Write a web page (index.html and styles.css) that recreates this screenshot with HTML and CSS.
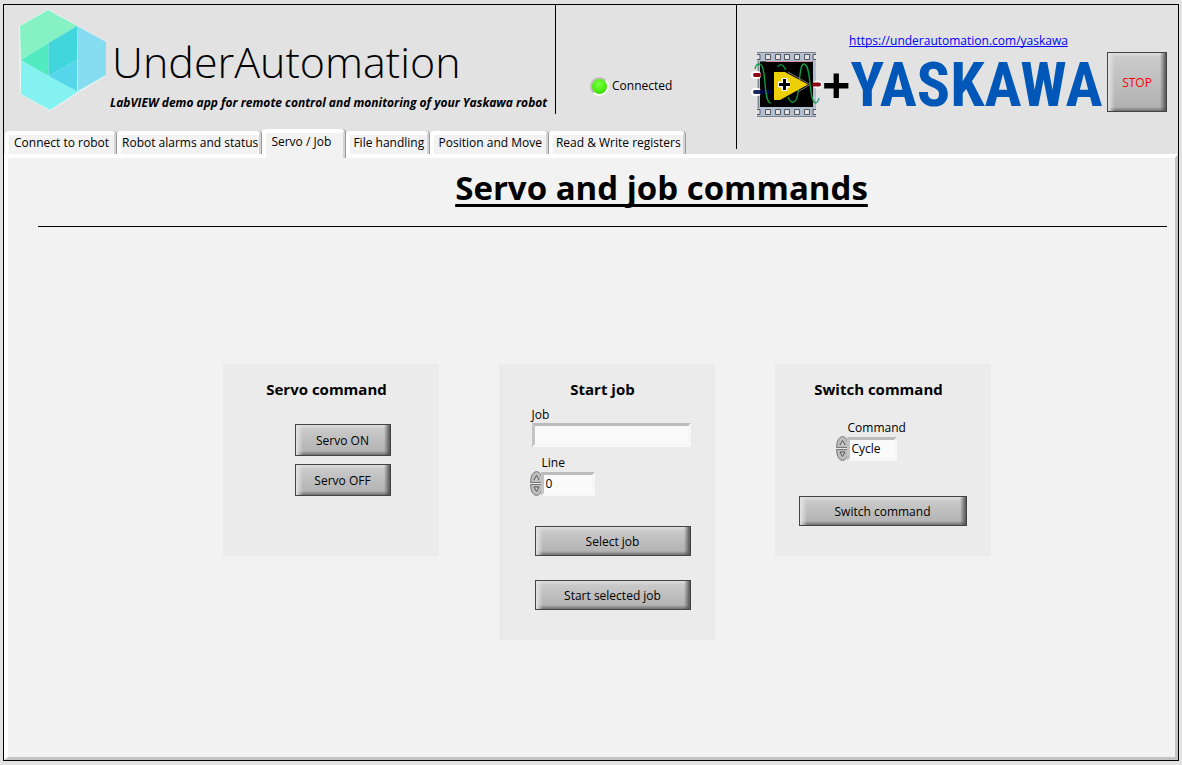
FILE: index.html
```html
<!DOCTYPE html>
<html lang="en">
<head>
<meta charset="utf-8">
<title>UnderAutomation - Yaskawa demo</title>
<link rel="stylesheet" href="styles.css">
</head>
<body>
<div class="frame">
  <header class="top">
    <div class="brand">
      <svg class="brand-mark" viewBox="0 0 88 102" aria-hidden="true">
        <path fill="#e9f6f4" d="M29 0 87 33v34L59 84 31 102 1 85 0 17z"/>
        <path fill="#86f2c4" d="M29 1 58 17 29.500 34 2 51 1 17z"/>
        <path fill="#84f2f0" d="M2 51 29.500 67 60 82 31 101 2 85z"/>
        <path fill="#86ddf1" d="M58 17 87 33v33L59 82z"/>
        <path fill="#52ebc0" d="M2 51 29.500 34v33z"/>
        <path fill="#40d6dc" d="M58 17v34L29.500 67V34z"/>
        <path fill="#55d6ea" d="M58 51v31L29.500 67z"/>
      </svg>
      <div class="brand-text">
        <div class="brand-name">UnderAutomation</div>
        <div class="tagline">LabVIEW demo app for remote control and monitoring of your Yaskawa robot</div>
      </div>
    </div>
    <div class="status"><span class="led"></span>Connected</div>
    <div class="partners">
      <a class="site" href="https://underautomation.com/yaskawa">https://underautomation.com/yaskawa</a>
      <div class="logos">
        <svg class="labview" viewBox="0 0 72 66" aria-hidden="true">
          <path fill="#b1bfd1" d="M7 1h59v64H7z"/>
          <g fill="#e2e2e2" stroke="#53575c">
            <path d="M15.500 2.500h5v5h-5zM25.500 2.500h5v5h-5zM34.500 2.500h5v5h-5zM44.500 2.500h5v5h-5zM54.500 2.500h5v5h-5zM15.500 57.500h5v5h-5zM25.500 57.500h5v5h-5zM34.500 57.500h5v5h-5zM44.500 57.500h5v5h-5zM54.500 57.500h5v5h-5z"/>
            <path d="M7 2.500h3v5H7M7 57.500h3v5H7M66 2.500h-3v5h3M66 57.500h-3v5h3"/>
          </g>
          <path fill="none" stroke="#7b838d" d="M7 .5h59M7 64.500h59M8.500 9v47"/>
          <path d="M10 9.500h53V55H10z"/>
          <path stroke="#d78b94" d="M16 9.500h46"/>
          <g fill="none" stroke-linecap="round">
            <path stroke="#fff" stroke-width="8" d="M5 23h2M5 40h2M67 32.500h1"/>
            <path stroke="#8a0614" stroke-width="4" d="M5 23h4M64 32.500h5"/>
            <path stroke="#17285f" stroke-width="4" d="M5 40h5"/>
          </g>
          <path stroke="#040447" stroke-width="4" d="M10 40h11"/>
          <g fill="none" stroke="#0c9f43" stroke-width="1.300">
            <path d="M5 17C6 12 8 12 10 12 17 14 13 51 20.700 51M27.700 15Q31.500 9 35.700 18M38 45Q42.500 55 47 46C50 34 49 12 54 12 62 12 58 51 66 51"/>
            <path stroke="#2ba88c" d="M66 51Q68 50 69 46"/>
          </g>
          <path fill="#edcf08" d="M24 20h11l23 12.500L30 48h-6z"/>
          <path stroke="#777" fill="none" d="M38 20 60 32.500 48 40"/>
          <path stroke="#fff" stroke-width="6" d="M28 32.500h12M34.500 26v13"/>
          <path stroke="#000" stroke-width="3" d="M29 32.500h11M34.500 27v11"/>
        </svg>
        <span class="plus">+</span>
        <span class="yaskawa">YASKAWA</span>
        <button class="btn stop" type="button">STOP</button>
      </div>
    </div>
    <nav class="tabs">
      <button class="tab" type="button">Connect to robot</button>
      <button class="tab wider" type="button">Robot alarms and status</button>
      <button class="tab short active" type="button" aria-current="page">Servo / Job</button>
      <button class="tab short" type="button">File handling</button>
      <button class="tab medium" type="button">Position and Move</button>
      <button class="tab wide" type="button">Read &amp; Write registers</button>
    </nav>
  </header>

  <main class="panel">
    <h1>Servo and job commands</h1>
    <hr>
    <div class="cards">
      <section class="card servo">
        <h2>Servo command</h2>
        <button class="btn" type="button">Servo ON</button>
        <button class="btn" type="button">Servo OFF</button>
      </section>

      <section class="card job">
        <h2>Start job</h2>
        <label for="job">Job</label>
        <input class="well" id="job" type="text">
        <label class="indent" for="line">Line</label>
        <div class="numeric">
          <div class="spinner">
            <button type="button" aria-label="Increase line"><svg viewBox="0 0 13 12"><path class="shell" d="M.5 11.500Q1 1 6.500.5 12 1 12.500 11.500z"/><path class="arrow" d="M4 9 6.500 4.500 9 9"/></svg></button>
            <button type="button" aria-label="Decrease line"><svg viewBox="0 0 13 12"><path class="shell" d="M.5.5Q1 11 6.500 11.500 12 11 12.500.5z"/><path class="arrow" d="M4 3h5L6.500 7.500z"/></svg></button>
          </div>
          <input class="well" id="line" type="text" value="0">
        </div>
        <button class="btn" type="button">Select job</button>
        <button class="btn" type="button">Start selected job</button>
      </section>

      <section class="card switch">
        <h2>Switch command</h2>
        <label for="command">Command</label>
        <div class="numeric">
          <div class="spinner">
            <button type="button" aria-label="Previous command"><svg viewBox="0 0 13 12"><path class="shell" d="M.5 11.500Q1 1 6.500.5 12 1 12.500 11.500z"/><path class="arrow" d="M4 9 6.500 4.500 9 9"/></svg></button>
            <button type="button" aria-label="Next command"><svg viewBox="0 0 13 12"><path class="shell" d="M.5.5Q1 11 6.500 11.500 12 11 12.500.5z"/><path class="arrow" d="M4 3h5L6.500 7.500z"/></svg></button>
          </div>
          <select class="well" id="command"><option>Cycle</option></select>
        </div>
        <button class="btn" type="button">Switch command</button>
      </section>
    </div>
  </main>
</div>
</body>
</html>
```
FILE: styles.css
```css
* { box-sizing: border-box; }

body {
  margin: 0;
  padding: 4px 3px;
  min-height: 100vh;
  display: flex;
  background: #e2e2e2;
  color: #000;
  font: 12px/16px "Segoe UI", "Open Sans", "Noto Sans", sans-serif;
}

button, input, select { font: inherit; color: inherit; }

.frame {
  flex: 1;
  min-width: 0;
  display: flex;
  flex-direction: column;
  border: 1px solid #000;
}

/* Header */
.top {
  display: grid;
  grid-template-columns: 551px 181px minmax(0, 1fr);
  grid-template-rows: 109px 40px;
}

.brand { display: flex; padding: 4px 0 0 15px; }
.brand-mark { width: 88px; height: 102px; flex: none; }
.brand-text { padding-top: 23px; white-space: nowrap; }
.brand-name { padding-left: 5px; font-size: 43px; line-height: 60px; font-weight: 300; }
.tagline { padding: 3px 0 0 3px; font-weight: 700; font-style: italic; }

.status {
  display: flex;
  align-items: center;
  gap: 3px;
  padding: 53px 0 0 34px;
  border-left: 1px solid #000;
}
.led {
  width: 19px;
  height: 19px;
  border: 2px solid;
  border-color: #bdbdbd #f6f6f6 #fafafa #bdbdbd;
  border-radius: 50%;
  background: radial-gradient(circle at 45% 35%, #7dff4a, #4cf010 50%, #36b80c);
}

.partners {
  grid-column: 3;
  grid-row: 1 / 3;
  margin-bottom: 5px;
  padding: 28px 11px 0 13px;
  border-left: 1px solid #000;
}
.site { display: block; text-align: center; color: #00f; text-decoration-skip-ink: none; }
.logos { display: flex; align-items: center; margin-top: 3px; white-space: nowrap; }
.labview { width: 72px; height: 66px; flex: none; }
.plus { font-size: 50px; line-height: 60px; font-weight: 700; }
.yaskawa {
  font: 700 62px/66px "Roboto Condensed", "Open Sans Condensed", "Noto Sans CJK JP", sans-serif;
  color: #0057b8;
}

/* Tabs */
.tabs { grid-column: 1 / 3; display: flex; align-items: flex-end; padding-left: 1px; }
.tab {
  min-width: 111px;
  height: 23px;
  padding: 0 1px 3px;
  border: solid #fff;
  border-width: 4px 2px 0 4px;
  border-right-color: #d4d4d4;
  border-radius: 4px 4px 0 0;
  box-shadow: 1px 0 #999;
  margin-right: 1px;
  background: #f2f2f2;
  line-height: 16px;
  white-space: nowrap;
}
.tab.short { min-width: 83px; }
.tab.medium { min-width: 118px; }
.tab.wide { min-width: 136px; }
.tab.wider { min-width: 144px; }
.tab.active {
  position: relative;
  height: 29px;
  margin-bottom: -4px;
  padding: 0 8px 8px 1px;
}

/* Page */
.panel {
  flex: 1;
  padding: 8px 8px 20px 30px;
  border: solid;
  border-width: 4px 3px 3px 4px;
  border-color: #fff #c4c4c4 #c4c4c4 #fff;
  background: #f2f2f2;
}
h1 {
  margin: 0;
  padding-left: 118px;
  text-align: center;
  font-size: 33px;
  line-height: 44px;
  font-weight: 700;
  text-decoration: underline;
  text-decoration-thickness: 3px;
  text-underline-offset: 4px;
  text-decoration-skip-ink: none;
}
hr { margin: 16px 0 137px; border: 0; border-top: 1px solid #000; }

.cards {
  display: flex;
  justify-content: center;
  align-items: flex-start;
  gap: 60px;
  padding-left: 8px;
}
.card {
  display: flex;
  flex-direction: column;
  align-items: flex-start;
  width: 216px;
  padding: 15px 24px 30px;
  background: #ebebeb;
}
h2 {
  align-self: stretch;
  margin: 0;
  padding-right: 8px;
  text-align: center;
  white-space: nowrap;
  font-size: 15px;
  line-height: 20px;
}

/* Raised buttons */
.btn {
  height: 30px;
  padding: 2px 0 0;
  border: 1px solid #444;
  background:
    linear-gradient(to right, #e4e4e4, transparent) left / 7px 100% no-repeat,
    linear-gradient(to left, #555, transparent) right / 6px 100% no-repeat,
    linear-gradient(#ddd, transparent) top / 100% 4px no-repeat,
    linear-gradient(to top, #707070, transparent) bottom / 100% 4px no-repeat,
    linear-gradient(#cdcdcd, #b0b0b0);
}
.stop {
  flex: none;
  align-self: flex-start;
  width: 60px;
  height: 60px;
  margin-left: auto;
  color: #f00;
}

.servo { padding-bottom: 60px; }
.servo .btn { width: 96px; height: 32px; margin: 0 0 0 48px; }
.servo h2 { margin-bottom: 25px; }
.servo .btn + .btn { margin-top: 8px; }

.job label { margin: 8px 0 0 9px; }
.job .indent { margin-left: 19px; }
.job #job { width: 159px; margin-left: 9px; }
.job .numeric { margin: 0 0 30px 7px; }
.job .btn { width: 156px; margin-left: 12px; }
.job .btn + .btn { margin-top: 24px; }
#line { width: 54px; }

.switch label { margin: 21px 0 0 49px; }
.switch .numeric { margin: 0 0 35px 37px; }
.switch .btn { width: 168px; }
#command { width: 50px; }

/* Sunken fields */
.well {
  appearance: none;
  height: 24px;
  padding: 0 2px;
  border: 3px solid;
  border-color: #bcbcbc #f7f7f7 #f8f8f8 #c4c4c4;
  border-radius: 0;
  background: #fafafa;
  line-height: 16px;
}
.numeric { display: flex; align-items: center; }
.spinner { display: flex; flex-direction: column; gap: 1px; width: 13px; margin-right: -2px; }
.spinner button { display: block; height: 12px; padding: 0; border: 0; background: none; }
.spinner svg { display: block; width: 13px; height: 12px; }
.shell { fill: #bdbdbd; stroke: #777; }
.arrow { fill: #ccc; stroke: #555; }
```
